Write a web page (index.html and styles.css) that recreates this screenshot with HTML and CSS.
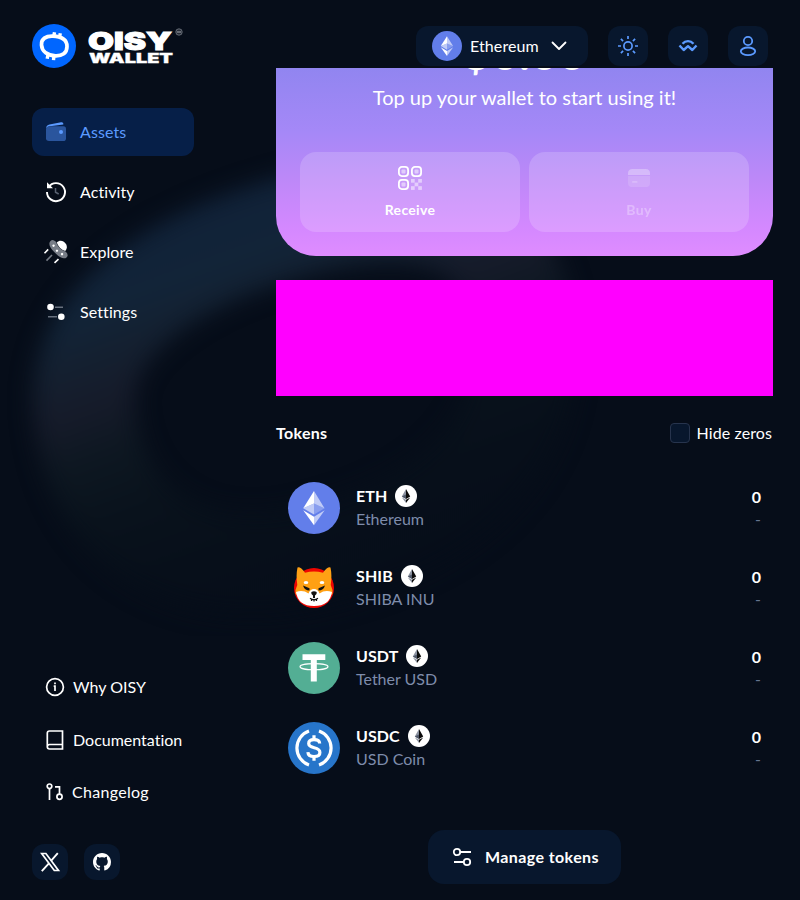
FILE: index.html
```html
<!DOCTYPE html>
<html lang="en">
<head>
<meta charset="utf-8">
<title>OISY Wallet</title>
<link rel="stylesheet" href="styles.css">
</head>
<body>
<svg width="0" height="0" class="defs" aria-hidden="true">
  <symbol id="eth-mark" viewBox="0 0 52 52">
    <circle cx="26" cy="26" r="26" fill="#627eea"/>
    <path d="M26 9v12.5l10.500 4.700z" fill="#fff" opacity=".6"/>
    <path d="M26 9L15.200 26.200 26 21.500z" fill="#fff"/>
    <path d="M26 34.700v8.600l10.700-15z" fill="#fff" opacity=".6"/>
    <path d="M26 43.300v-8.600L15.200 28.300z" fill="#fff"/>
    <path d="M26 32.600l10.700-6.400L26 21.500z" fill="#fff" opacity=".25"/>
    <path d="M15.200 26.200L26 32.600V21.500z" fill="#fff" opacity=".6"/>
  </symbol>
  <symbol id="eth-badge" viewBox="0 0 22 22">
    <circle cx="11" cy="11" r="11" fill="#fff"/>
    <path d="M11 4v9.900l-4.200-2.500z" fill="#8b92a0"/>
    <path d="M11 4v9.900l4.200-2.500z" fill="#0a0a0a"/>
    <path d="M11 9.500v4.400l-4.200-2.500z" fill="#50596a"/>
    <path d="M11 14.800V18l-4.100-5.600z" fill="#8b92a0"/>
    <path d="M11 14.800V18l4.200-5.600z" fill="#0a0a0a"/>
  </symbol>
</svg>

<svg class="glow" viewBox="0 0 800 900" aria-hidden="true">
  <defs>
    <linearGradient id="ring" gradientUnits="userSpaceOnUse" x1="200" y1="190" x2="350" y2="600">
      <stop offset="0" stop-color="#102138"/>
      <stop offset=".18" stop-color="#122438"/>
      <stop offset=".28" stop-color="#142030"/>
      <stop offset=".38" stop-color="#161b2a"/>
      <stop offset=".5" stop-color="#0d1721"/>
      <stop offset=".64" stop-color="#09121c"/>
      <stop offset=".8" stop-color="#070f1a"/>
      <stop offset="1" stop-color="#060d19"/>
    </linearGradient>
    <filter id="soft" x="-20%" y="-20%" width="140%" height="140%" color-interpolation-filters="sRGB"><feGaussianBlur stdDeviation="11"/></filter>
  </defs>
  <path d="M84 400C84 315 180 255 310 222C450 190 518 235 525 340C530 470 420 535 300 560C170 585 87 510 84 400Z" fill="none" stroke="url(#ring)" stroke-width="102" filter="url(#soft)"/>
</svg>

<div class="page">
  <header class="topbar">
    <svg class="logo" width="152" height="44" viewBox="0 0 152 44" role="img" aria-label="OISY Wallet">
      <circle cx="22" cy="22" r="22" fill="#0066ff"/>
      <path d="M9.500 21C9 14.800 14 11.800 21 12.200C29.500 12.600 35 16 35 22.500C35 29.500 30 32 23.500 31.800C15.500 31.500 10 27.500 9.500 21Z" fill="none" stroke="#fff" stroke-width="3.700"/>
      <path d="M21.700 12.500l.8-4.300M27.500 13.500l.8-4.300M16 30.500l-.8 4.300M22 31.500l-.5 4.600" stroke="#fff" stroke-width="3.400"/>
      <text class="logo-word" x="56" y="26" font-size="24.500" stroke-width="1" textLength="84" lengthAdjust="spacingAndGlyphs">OISY</text>
      <text class="logo-word" x="57" y="39.200" font-size="12.800" stroke-width=".3" textLength="84" lengthAdjust="spacingAndGlyphs">WALLET</text>
      <circle cx="147" cy="8" r="3.200" fill="#252a35" stroke="#777d88" stroke-width=".8"/>
      <path d="M145 8h4" stroke="#a6abb4" stroke-width="1"/>
    </svg>
    <nav class="tools">
      <button class="chip network">
        <svg width="30" height="30"><use href="#eth-mark"/></svg>
        <span>Ethereum</span>
        <svg width="16" height="10" viewBox="0 0 16 10" fill="none" stroke="#fff" stroke-width="1.800" stroke-linecap="round" stroke-linejoin="round"><path d="M1.500 1.500L8 8l6.500-6.500"/></svg>
      </button>
      <button class="chip square" aria-label="Theme">
        <svg width="20" height="20" viewBox="0 0 20 20" fill="none" stroke="#5b9aff" stroke-width="1.700"><circle cx="10" cy="10" r="4.100"/><path d="M10 0v3M10 17v3M0 10h3M17 10h3M2.900 2.900l2.200 2.200M14.900 14.900l2.200 2.200M17.100 2.900l-2.200 2.200M5.100 14.900l-2.200 2.200"/></svg>
      </button>
      <button class="chip square" aria-label="WalletConnect">
        <svg width="20" height="20" viewBox="0 0 20 20" fill="none" stroke="#5b9aff" stroke-width="2.400" stroke-linejoin="round"><path d="M1.500 9.500l4.200 4.500L10 10.200 14.300 14 18.500 9.500"/><path d="M4.500 7.700C7.500 4.300 12.500 4.300 15.500 7.700"/></svg>
      </button>
      <button class="chip square" aria-label="Account">
        <svg width="20" height="20" viewBox="0 0 20 20" fill="none" stroke="#5b9aff" stroke-width="1.800"><circle cx="10" cy="5" r="4.200"/><ellipse cx="10" cy="15.300" rx="7.200" ry="3.800"/></svg>
      </button>
    </nav>
  </header>

  <div class="columns">
    <aside class="sidebar">
      <nav class="menu">
        <a class="item active">
          <svg width="24" height="24" viewBox="0 0 24 24"><path d="M2.200 8.200C2.200 6 3.500 5 5.500 4.600L17 2.300c1.800-.3 2.600.8 2.300 2.200L6 6.200C4 6.500 3.300 7 2.200 8.500z" fill="#5b9aff"/><path d="M2 8.500C2.500 7 3.800 6.300 5.500 6.300h14C21.200 6.300 22 7.300 22 9v9.200c0 2-1 2.800-2.800 2.800H5c-2 0-3-1-3-2.800z" fill="#2a559d"/><circle cx="17" cy="12" r="2" fill="#5b9aff"/></svg>
          Assets
        </a>
        <a class="item">
          <svg width="24" height="24" viewBox="0 0 24 24" fill="none"><path d="M4.600 7A9 9 0 1 1 3 12" stroke="#fff" stroke-width="1.900"/><path d="M3 2.200v6h6z" fill="#fff"/><path d="M11.500 8v4.200l3.200 1.800" stroke="#596272" stroke-width="1.500"/></svg>
          Activity
        </a>
        <a class="item">
          <svg width="24" height="24" viewBox="0 0 24 24"><g transform="translate(.3 -.6) rotate(45 14 10)"><path d="M8 6.200c0-7.500 12-7.500 12 0q-6 3-12 0z" fill="#fff"/><path d="M2.500 9.500Q2.500 6.500 7 6.300 14 10 21 6.300 25.500 6.500 25.500 9.500 25.500 14.800 14 14.800T2.500 9.500z" fill="#777d87"/><circle cx="8" cy="10.700" r="1.200" fill="#fff"/><circle cx="14" cy="11.900" r="1.200" fill="#fff"/><circle cx="20" cy="10.700" r="1.200" fill="#fff"/></g><g fill="none" stroke-width="1.600"><path d="M4.200 9.400L.5 13.200M14.500 19.200l-4 3.700" stroke="#fff"/><path d="M8 15l-5.500 5.600" stroke="#777d87"/></g></svg>
          Explore
        </a>
        <a class="item">
          <svg width="24" height="24" viewBox="0 0 24 24"><path d="M11 7.300h8M4 16.700h9" stroke="#68717e" stroke-width="1.600"/><circle cx="6.500" cy="7" r="3.300" fill="#fff"/><circle cx="17.300" cy="16.700" r="3.300" fill="#fff"/></svg>
          Settings
        </a>
      </nav>

      <div class="links">
        <a class="link why"><svg width="20" height="20" viewBox="0 0 20 20" fill="none" stroke="#fff" stroke-width="1.700"><circle cx="10" cy="10" r="8.400"/><path d="M8.700 9.200H10V14M10 5.500v1.800"/></svg><span>Why OISY</span></a>
        <a class="link docs"><svg width="20" height="20" viewBox="0 0 20 20" fill="none" stroke="#fff" stroke-width="1.700"><path d="M4.500 1h13v18h-13A2.200 2.200 0 0 1 2.300 16.800V3.200A2.200 2.200 0 0 1 4.500 1zM17.500 14.500h-13a2.200 2.200 0 0 0-2.200 2.300"/></svg><span>Documentation</span></a>
        <a class="link log"><svg width="20" height="20" viewBox="0 0 20 20" fill="none" stroke="#fff" stroke-width="1.700"><circle cx="4.500" cy="4.300" r="2.300"/><path d="M4.500 6.600V18"/><circle cx="14.500" cy="14.800" r="2.600"/><path d="M14.500 12.200V4.800H10"/></svg><span>Changelog</span></a>
      </div>

      <div class="social">
        <a class="chip mini"><svg width="20" height="20" viewBox="0 0 20 20"><path d="M1.700 1.500h4.200l12.600 17h-4.200z" fill="none" stroke="#fff" stroke-width="1.700"/><path d="M17.800 1.200l-6.800 7.600M8.900 11.300l-7.100 7.900" stroke="#fff" stroke-width="1.900"/></svg></a>
        <a class="chip mini"><svg width="18" height="18" viewBox="0 0 16 16" fill="#fff"><path d="M8 0C3.580 0 0 3.580 0 8c0 3.540 2.290 6.530 5.470 7.590.4.070.55-.17.55-.38 0-.19-.01-.82-.01-1.490-2.010.37-2.530-.49-2.690-.94-.09-.23-.48-.94-.82-1.130-.28-.15-.68-.52-.01-.53.63-.01 1.080.58 1.230.82.720 1.210 1.870.87 2.330.66.070-.52.280-.87.510-1.070-1.780-.2-3.640-.89-3.640-3.950 0-.87.310-1.590.82-2.150-.08-.2-.36-1.020.08-2.120 0 0 .67-.21 2.200.82.640-.18 1.320-.27 2-.27s1.360.09 2 .27c1.530-1.040 2.200-.82 2.200-.82.440 1.100.16 1.920.08 2.120.51.560.82 1.270.82 2.150 0 3.070-1.870 3.750-3.650 3.950.29.250.54.730.54 1.480 0 1.070-.01 1.930-.01 2.200 0 .21.150.46.550.38A8.010 8.010 0 0 0 16 8c0-4.420-3.580-8-8-8z"/></svg></a>
      </div>
    </aside>

    <main class="content">
      <section class="hero">
        <div class="balance">$0.00</div>
        <p class="hint">Top up your wallet to start using it!</p>
        <div class="actions">
          <button class="action">
            <svg width="24" height="24" viewBox="0 0 24 24"><g fill="none" stroke="#fff" stroke-width="1.800"><rect x=".9" y=".9" width="9.200" height="9.200" rx="3"/><rect x="13.900" y=".9" width="9.200" height="9.200" rx="3"/><rect x=".9" y="13.900" width="9.200" height="9.200" rx="3"/></g><g fill="#fff" opacity=".5"><rect x="3.500" y="3.500" width="4" height="4" rx="1"/><rect x="16.500" y="3.500" width="4" height="4" rx="1"/><rect x="3.500" y="16.500" width="4" height="4" rx="1"/><rect x="13" y="13" width="3.700" height="3.700"/><rect x="20.200" y="13" width="3.700" height="3.700"/><rect x="16.600" y="16.600" width="3.700" height="3.700"/><rect x="13" y="20.200" width="3.700" height="3.700"/><rect x="20.200" y="20.200" width="3.700" height="3.700"/></g></svg>
            <span>Receive</span>
          </button>
          <button class="action off">
            <svg width="24" height="24" viewBox="0 0 24 24" fill="#fff"><path d="M1 9V7.500Q1 3 5.500 3h13Q23 3 23 7.500V9z"/><path d="M1 10h22v7q0 4-4 4H5q-4 0-4-4z" opacity=".45"/><rect x="5" y="15" width="5.500" height="1.800" rx=".9"/></svg>
            <span>Buy</span>
          </button>
        </div>
      </section>

      <div class="banner"></div>

      <div class="list-head">
        <h2>Tokens</h2>
        <label class="toggle"><span class="box"></span>Hide zeros</label>
      </div>

      <ul class="tokens">
        <li class="token">
          <svg width="52" height="52"><use href="#eth-mark"/></svg>
          <div class="info"><div class="sym"><b>ETH</b><svg width="22" height="22"><use href="#eth-badge"/></svg></div><div class="name">Ethereum</div></div>
          <div class="amount"><b>0</b><span>-</span></div>
        </li>
        <li class="token">
          <svg width="52" height="52" viewBox="0 0 52 52"><circle cx="26" cy="26" r="20" fill="#f00500"/><path d="M9.500 5.500q3-1 7.500 5.300Q26 8 35 10.800q4.500-6.300 7.500-5.300 1.700 8 .2 17.500 2.500 5 1.800 9L26 40 7.500 32q-.7-4 1.800-9Q7.800 13.500 9.500 5.500z" fill="#ffa014"/><path d="M8 30q7-2.500 12.500 1.500Q22 27 26 27t5.500 4.500Q37 27.500 44 30q-2 14-18 14T8 30z" fill="#fff"/><ellipse cx="18" cy="20.500" rx="2.300" ry="1.600" fill="#fff"/><ellipse cx="34" cy="20.500" rx="2.300" ry="1.600" fill="#fff"/><path d="M15 23.500l6.500 2.800v2.200q-5 0-6.500-5zM37 23.500l-6.500 2.800v2.200q5 0 6.500-5zM23.300 30q2.700-1.500 5.400 0 .5 2-1.700 3.600V36h-2v-2.400q-2.200-1.600-1.700-3.600z" fill="#111"/><path d="M22 36.300q4 2.800 8 0M23.500 37.500v1.500M26 38v1.500M28.500 37.500v1.500" fill="none" stroke="#111" stroke-width="1.200"/></svg>
          <div class="info"><div class="sym"><b>SHIB</b><svg width="22" height="22"><use href="#eth-badge"/></svg></div><div class="name">SHIBA INU</div></div>
          <div class="amount"><b>0</b><span>-</span></div>
        </li>
        <li class="token">
          <svg width="52" height="52" viewBox="0 0 52 52"><circle cx="26" cy="26" r="26" fill="#53ae94"/><path d="M14.500 12.200h22.800v5.700h-8.500v21.600h-6V17.900h-8.300z" fill="#fff"/><ellipse cx="26" cy="24.700" rx="14" ry="3.100" fill="none" stroke="#fff" stroke-width="1.100"/></svg>
          <div class="info"><div class="sym"><b>USDT</b><svg width="22" height="22"><use href="#eth-badge"/></svg></div><div class="name">Tether USD</div></div>
          <div class="amount"><b>0</b><span>-</span></div>
        </li>
        <li class="token">
          <svg width="52" height="52" viewBox="0 0 52 52" fill="none" stroke="#fff" stroke-width="3.200"><circle cx="26" cy="26" r="26" fill="#2775ca" stroke="none"/><path d="M21 9A18 18 0 0 0 21 43M31 9A18 18 0 0 1 31 43"/><path d="M26 13.300v4M26 34.700v4"/><path d="M31.700 21.500C31.500 18.500 29 17.700 26 17.700c-3.300 0-5.300 1.400-5.300 3.900 0 5.900 11.200 2.500 11.200 8.800 0 2.500-2.300 4.100-5.900 4.100-3.500 0-5.900-1.200-6.100-4.400"/></svg>
          <div class="info"><div class="sym"><b>USDC</b><svg width="22" height="22"><use href="#eth-badge"/></svg></div><div class="name">USD Coin</div></div>
          <div class="amount"><b>0</b><span>-</span></div>
        </li>
      </ul>

      <button class="manage">
        <svg width="20" height="20" viewBox="0 0 20 20" fill="none" stroke="#fff" stroke-width="1.800"><circle cx="5" cy="5" r="3.200"/><path d="M8.200 5H19M2 15h9.800"/><circle cx="15" cy="15" r="3.200"/></svg>
        <span>Manage tokens</span>
      </button>
    </main>
  </div>
</div>
</body>
</html>
```
FILE: styles.css
```css
* { box-sizing: border-box; }
body {
  margin: 0;
  width: 800px;
  height: 900px;
  overflow: hidden;
  background: #060d19;
  color: #fff;
  font: 400 16px/24px Lato, "Liberation Sans", sans-serif;
  font-variant-ligatures: none;
}
svg { display: block; flex: none; overflow: visible; }
button { border: 0; padding: 0; color: inherit; font: inherit; letter-spacing: inherit; }
.defs { position: absolute; }
.glow { position: absolute; left: 0; top: 0; width: 800px; height: 900px; }
.page { position: relative; height: 900px; display: flex; flex-direction: column; }

.topbar { height: 68px; flex: none; padding: 24px 32px 0; display: flex; justify-content: space-between; align-items: flex-start; }
.logo-word { font-family: Inter, sans-serif; font-weight: 900; fill: #fff; stroke: #fff; }
.tools { display: flex; gap: 20px; padding-top: 2px; }
.chip { background: #08172d; border-radius: 12px; display: flex; align-items: center; justify-content: center; }
.network { width: 172px; height: 40px; padding-left: 16px; justify-content: flex-start; gap: 8px; }
.network span { width: 73px; text-align: left; letter-spacing: .1px; }
.square { width: 40px; height: 40px; }

.columns { flex: 1; display: flex; padding: 0 27px 0 32px; justify-content: space-between; min-height: 0; }
.sidebar { width: 162px; padding-top: 40px; display: flex; flex-direction: column; }
.menu { display: flex; flex-direction: column; gap: 12px; }
.item { height: 48px; border-radius: 12px; padding-left: 12px; display: flex; align-items: center; gap: 12px; letter-spacing: .1px; }
.active { background: #061f48; color: #5b9aff; }
.links { margin-top: 339px; display: flex; flex-direction: column; gap: 28.500px; }
.link { height: 24px; display: flex; align-items: center; gap: 8px; padding-left: 13px; letter-spacing: .3px; }
.why, .docs { letter-spacing: 0; }
.log { gap: 7px; }
.social { display: flex; gap: 16px; margin-top: 40px; }
.mini { width: 36px; height: 36px; }

.content { width: 497px; display: flex; flex-direction: column; }
.hero { height: 188px; flex: none; overflow: hidden; border-radius: 0 0 40px 40px; padding: 0 24px; background: linear-gradient(to bottom, #9185f0 0, #a588f7 34%, #bd88f8 59%, #d488ff 85%, #df8cff 100%); display: flex; flex-direction: column; justify-content: flex-end; }
.balance { font-size: 48px; font-weight: 700; line-height: 56px; text-align: center; margin-bottom: 3px; }
.hint { margin: 0 0 41px; line-height: 28px; font-size: 20px; text-align: center; }
.actions { display: flex; gap: 9px; margin-bottom: 24px; }
.action { flex: 1; height: 80px; border-radius: 16px; background: rgba(255,255,255,.17); display: flex; flex-direction: column; align-items: center; padding-top: 14px; gap: 10px; font-size: 14px; line-height: 20px; font-weight: 700; letter-spacing: .3px; }
.off svg, .off span { opacity: .3; }
.banner { height: 116px; flex: none; margin-top: 24px; background: #f0f; }
.list-head { height: 24px; flex: none; margin-top: 25px; display: flex; justify-content: space-between; align-items: center; }
h2 { margin: 0; font-size: 16px; line-height: 24px; font-weight: 700; letter-spacing: .3px; }
.toggle { display: flex; align-items: center; gap: 7px; padding-right: 1px; letter-spacing: .1px; }
.box { width: 20px; height: 20px; border: 1px solid #27344d; border-radius: 4px; background: #08172d; }
.tokens { list-style: none; margin: 23px 0 0; padding: 0 12px; }
.token { height: 80px; display: flex; align-items: center; gap: 16px; }
.info { flex: 1; padding-bottom: 2px; }
.sym { display: flex; align-items: center; gap: 8px; height: 23px; letter-spacing: .1px; }
.name { height: 23px; line-height: 23px; color: #7e8cab; }
.amount { display: flex; flex-direction: column; align-items: flex-end; line-height: 22px; }
.amount span { color: #66758f; }
.manage { align-self: center; width: 193px; height: 54px; flex: none; margin-top: 42px; border-radius: 16px; background: #08172d; display: flex; align-items: center; padding-left: 24px; gap: 13px; font-weight: 700; letter-spacing: .4px; }
```
